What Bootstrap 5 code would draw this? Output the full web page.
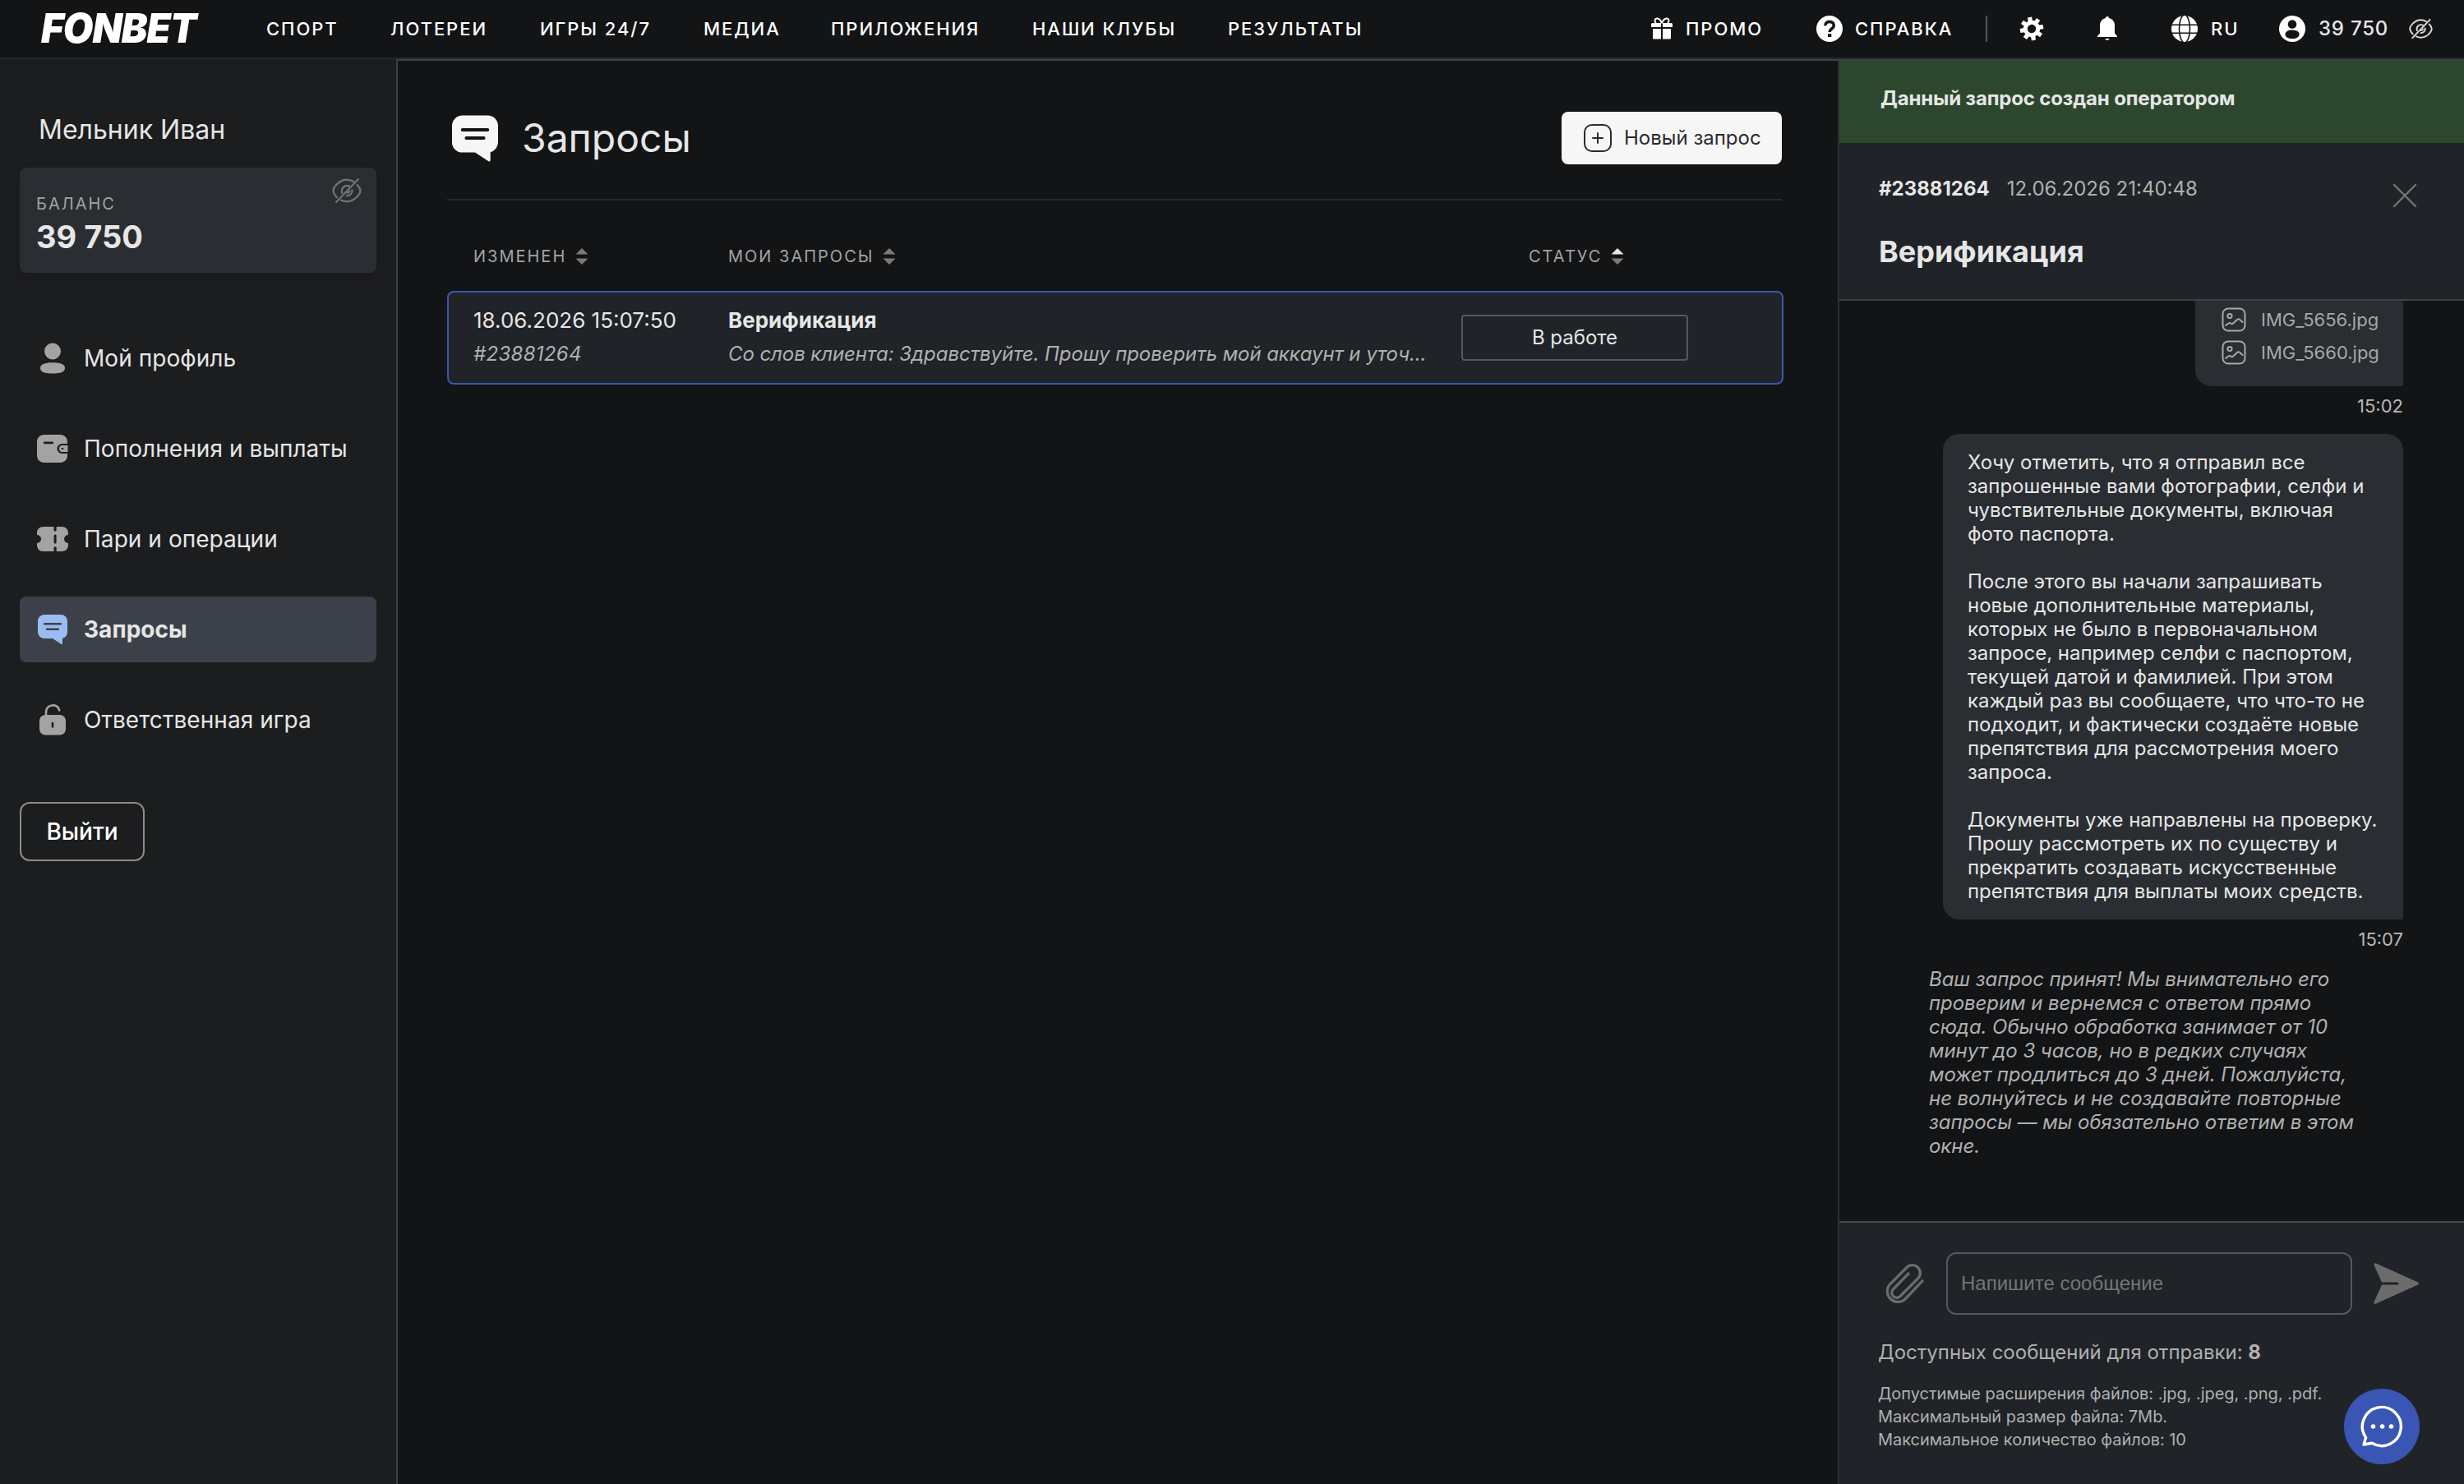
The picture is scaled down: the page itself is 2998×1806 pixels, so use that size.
<!DOCTYPE html>
<html lang="ru">
<head>
<meta charset="utf-8">
<title>Запросы</title>
<meta name="viewport" content="width=device-width, initial-scale=1">
<link href="https://cdn.jsdelivr.net/npm/bootstrap@5.3.0/dist/css/bootstrap.min.css" rel="stylesheet">
<style>
:root{--ink:#e6e6e6;--dim:#a3a3a3;--edge:#3c4048;--card:#2a2d32;--tone:#202328}
body{font-family:Inter,"Liberation Sans",sans-serif;background:#131416;color:var(--ink);font-size:24px;line-height:30px;height:1806px;overflow:hidden}
svg{display:block;flex:none}
a{color:inherit;text-decoration:none}
.topbar{height:72px;border-bottom:2px solid #26282b;color:#fff;font-size:22px;font-weight:500;letter-spacing:1.95px;line-height:30px}
.brand{width:274px;margin-left:50px;letter-spacing:-1px}
.brand span{display:inline-block;font-size:49px;font-weight:900;font-style:italic;line-height:70px;transform-origin:0 50%;transform:scaleX(.965)}
.side{width:484px;background:#1c1d1f;border-right:2px solid var(--edge);padding:66px 24px 0}
.uname{font-size:32px;line-height:40px;padding-left:23px}
.balance{height:128px;margin-top:26px;border-radius:8px;background:var(--card);padding:32px 20px 0;box-shadow:0 6px 16px rgba(0,0,0,.12)}
.balance .lbl{font-size:20px;line-height:24px;letter-spacing:2px;color:var(--dim)}
.balance .sum{font-size:38px;font-weight:700;line-height:44px;margin-top:6px}
.balance svg{position:absolute;right:18px;top:10px}
.menu{margin-top:64px;gap:30px}
.menu a{height:80px;border-radius:8px;padding-left:21px;font-size:28px;letter-spacing:.05px;color:var(--ink)}
.menu a svg{margin-right:19px;color:#a3a3a3}
.menu a.active{background:#3c4049;font-weight:700}
.menu a.active svg{color:#99bdf0}
.btn-exit{margin-top:60px;width:152px;height:72px;border:2px solid #8c8c8c;border-radius:12px;color:#fff;font-size:28px;font-weight:500;padding:0}
.work{border-top:2px solid var(--edge)}
.page{padding:0 68px 0 60px}
.page-head{height:170px;padding-top:20px;border-bottom:2px solid #2a2b31}
.page-head h1{font-size:48px;line-height:60px;font-weight:400;margin:0 0 0 29px}
.btn-new{width:268px;height:64px;border-radius:8px;background:#f6f6f6;color:#2b2b2e;font-size:24px;padding:0 0 0 26px;gap:15px}
.thead-row{height:110px;padding:26px 0 0 32px;font-size:20px;letter-spacing:2px;color:var(--dim)}
.thead-row svg{margin-left:11px}
.c1{width:310px}.c2{width:892px}
.req{height:114px;margin-right:-2px;border:2px solid #3a56b0;border-radius:8px;background:var(--tone);padding:0 0 3px 30px}
.req .l1{font-size:26px;line-height:32px}
.req .l2{font-size:24px;line-height:30px;margin-top:10px;font-style:italic;color:#b0b0b0;letter-spacing:-.08px}
.req .c1 .l2{letter-spacing:.3px}
.req .c2{padding-right:43px}
.status{width:276px;height:56px;border:2px solid #545865;border-radius:4px;line-height:52px;margin-top:3px}
.panel{width:762px;border-left:2px solid #2c2e34}
.note{height:100px;background:#2d472e;padding:31px 0 0 50px;font-weight:700;letter-spacing:-.15px}
.phead{height:192px;background:var(--tone);border-bottom:2px solid var(--edge);padding:41px 0 0 48px}
.phead h2{font-size:36px;line-height:44px;font-weight:700;margin:39px 0 0}
.phead svg{position:absolute;right:58px;top:50px}
.dimtext{color:#b0b0b0}
.chat{height:1120px;padding-right:74px;font-size:24px;line-height:29px}
.bub{background:var(--card);border-radius:20px 20px 0 20px}
.files{width:253px;height:104px;border-radius:0 0 0 20px;padding:3px 0 0 32px;font-size:22px;color:#a8a8a8}
.files div{height:40px;gap:18px}
.files div span{padding-top:1px}
.stamp{height:58px;padding-top:10px;font-size:22px;color:#b8b8b8}
.txt{width:560px;padding:20px 0 20px 30px;white-space:pre-line;letter-spacing:-.01px}
.sys{width:560px;margin-left:109px;padding-right:30px;font-style:italic;color:#b0b0b0;white-space:pre-line;letter-spacing:-.06px}
.composer{height:320px;background:var(--tone);border-top:2px solid #454952}
.crow{padding:36px 55px 0 55px;color:#6b6b6b}
.crow input{flex:none;width:494px;height:76px;margin-left:27px;border:2px solid #545865;border-radius:12px;background:transparent;padding:0 16px;font-family:"Liberation Sans",sans-serif;font-size:24px;color:#ddd}
.crow input::placeholder{color:#757575;opacity:1}
.left8{padding:31px 0 0 47px}
.rules{padding:21px 0 0 47px;font-size:20px;line-height:28px;letter-spacing:-.04px}
.fab{position:absolute;right:54px;bottom:24px;width:92px;height:92px;background:#3a56b4;border-radius:50%}
</style>
</head>
<body class="d-flex flex-column m-0">
<svg width="0" height="0" class="position-absolute">
  <symbol id="chat" viewBox="0 0 36 36"><path fill="currentColor" fill-rule="evenodd" d="M8 0h20a8 8 0 0 1 8 8v13a8 8 0 0 1-6 7.700V35a1 1 0 0 1-1.700.700L18 29H8a8 8 0 0 1-8-8V8a8 8 0 0 1 8-8zM8.200 10a1.300 1.300 0 0 0 0 2.600h19.600a1.300 1.300 0 0 0 0-2.600zM11.200 16.400a1.300 1.300 0 0 0 0 2.600h13.600a1.300 1.300 0 0 0 0-2.600z"/></symbol>
  <symbol id="eye" viewBox="0 0 34 30"><g fill="none" stroke="currentColor" stroke-width="2.300" stroke-linecap="round"><path d="M5 28L30 2"/><path d="M5.500 22.500C3 20 1.500 17 1.500 15 1.500 11 8 2.500 17 2.500c3 0 5.500.800 7.700 2.200M29 8.500c2.200 2.300 3.500 4.900 3.500 6.500 0 4-6.500 12.500-15.500 12.500-2.400 0-4.500-.600-6.500-1.500"/><path d="M11.500 17.500C10 11.500 15 8 20 9.800M23 14.500c.5 3.500-2 6.500-6 6.500"/><path d="M17.500 17.500c1.500 0 2.200-1 2.400-2"/></g></symbol>
  <symbol id="pic" viewBox="0 0 30 30"><g fill="none" stroke="currentColor" stroke-width="2"><rect x="1.500" y="1.500" width="27" height="27" rx="6.500"/><circle cx="10" cy="10.500" r="2.600"/><path stroke-linecap="round" stroke-linejoin="round" d="M5 22l3.500-2.500c1-.7 2-.6 2.800.1.900.8 1.900.8 2.800 0l5-4.600c1-.9 2.200-.8 3.200.1L25.500 18"/></g></symbol>
  <symbol id="sort" viewBox="0 0 16 20"><path d="M8 0l7.500 7.500H.500z" fill="var(--up,#7a7a7a)"/><path d="M8 20l7.500-7.500H.500z" fill="#7a7a7a"/></symbol>
</svg>

<header class="topbar d-flex align-items-center flex-shrink-0">
  <a class="brand" href="#"><span>FONBET</span></a>
  <nav class="d-flex text-nowrap">
    <a href="#" style="width:151px">СПОРТ</a><a href="#" style="width:182px">ЛОТЕРЕИ</a><a href="#" style="width:199px">ИГРЫ 24/7</a><a href="#" style="width:155px">МЕДИА</a><a href="#" style="width:245px">ПРИЛОЖЕНИЯ</a><a href="#" style="width:238px">НАШИ КЛУБЫ</a><a href="#">РЕЗУЛЬТАТЫ</a>
  </nav>
  <div class="d-flex align-items-center ms-auto text-nowrap" style="width:989px">
    <a href="#" class="d-flex align-items-center" style="width:201px">
      <svg width="26" height="28" viewBox="0 0 26 28" class="me-3"><g fill="#fff"><path d="M0 8.500A1.500 1.500 0 0 1 1.500 7H12v5H0zM14 7h10.500A1.500 1.500 0 0 1 26 8.500V12H14zM2 14h10v12.500H3A1 1 0 0 1 2 25.500zM14 14h10v11.500a1 1 0 0 1-1 1h-9z"/><path d="M13 7C10 0 4.500.5 4.500 4c0 1.500.8 2.500 1.500 3M13 7c3-7 8.500-6.500 8.500-3 0 1.500-.8 2.500-1.500 3" fill="none" stroke="#fff" stroke-width="2"/></g></svg>ПРОМО</a>
    <a href="#" class="d-flex align-items-center" style="width:206px">
      <svg width="32" height="32" viewBox="0 0 32 32" style="margin-right:15px"><circle cx="16" cy="16" r="16" fill="#fff"/><path d="M10.800 12.300c0-3.200 2.200-4.900 5.200-4.900s5.300 1.800 5.300 4.600c0 4-5.200 4-5.200 8" fill="none" stroke="#131416" stroke-width="3.600"/><path d="M14 22.200h4.300v3.800H14z" fill="#131416"/></svg>СПРАВКА</a>
    <span style="width:2px;height:32px;background:#55575b;margin-right:39px"></span>
    <a href="#" style="width:94px"><svg width="30" height="30" viewBox="0 0 30 30"><g transform="rotate(-10 15 15)" fill="none" stroke="#fff"><circle cx="15" cy="15" r="7.700" stroke-width="5"/><g stroke-width="5.200"><path d="M15 .8v5M15 24.200v5M.8 15h5M24.200 15h5M5 5l3.500 3.500M21.500 21.500L25 25M5 25l3.500-3.500M21.500 8.500L25 5"/></g></g></svg></a>
    <a href="#" style="width:91px"><svg width="26" height="30" viewBox="0 0 26 30" fill="#fff"><path d="M13 0a2 2 0 0 1 2 2c4.500 1 7 4.500 7 9v9.500l3 3.500v1H1v-1l3-3.500V11c0-4.500 2.500-8 7-9a2 2 0 0 1 2-2zM10.300 27h5.400a2.800 2.800 0 0 1-5.400 0z"/></svg></a>
    <a href="#" class="d-flex align-items-center" style="width:131px"><svg width="32" height="32" viewBox="0 0 32 32" style="margin-right:16px"><circle cx="16" cy="16" r="16" fill="#fff"/><g fill="none" stroke="#131416" stroke-width="1.600"><ellipse cx="16" cy="16" rx="6.500" ry="17"/><path d="M0 11.200h32M0 21.200h32"/></g></svg>RU</a>
    <a href="#" class="d-flex align-items-center" style="width:158px;font-size:24px;letter-spacing:.8px;color:#e6e6e6"><svg width="32" height="32" viewBox="0 0 32 32" style="margin-right:16px"><circle cx="16" cy="16" r="16" fill="#fff"/><circle cx="16" cy="10.500" r="5.300" fill="#131416"/><path d="M7.500 23c0-3.600 3.500-5.500 8.500-5.500s8.500 1.900 8.500 5.500c0 3.300-3.500 5-8.500 5s-8.500-1.700-8.500-5z" fill="#131416"/></svg>39 750</a>
    <svg width="29" height="26" color="#d9d9d9"><use href="#eye"/></svg>
  </div>
</header>

<div class="d-flex flex-grow-1">
  <aside class="side flex-shrink-0">
    <div class="uname">Мельник Иван</div>
    <div class="balance position-relative">
      <div class="lbl">БАЛАНС</div>
      <div class="sum">39 750</div>
      <svg width="36" height="36" color="#6f7073"><use href="#eye"/></svg>
    </div>
    <nav class="menu d-flex flex-column">
      <a href="#" class="d-flex align-items-center"><svg width="38" height="38" viewBox="0 0 38 38" fill="currentColor"><circle cx="19" cy="10.500" r="10"/><path d="M4 31c0-4.500 5-6.700 15-6.700S34 26.500 34 31s-5 6.500-15 6.500S4 35.500 4 31z"/></svg>Мой профиль</a>
      <a href="#" class="d-flex align-items-center"><svg width="38" height="34" viewBox="0 0 38 34"><path fill="currentColor" fill-rule="evenodd" d="M9 0h19c5.500 0 9 3.500 9 9v2h-6.500a6 6 0 0 0 0 12H37v2c0 5.500-3.500 9-9 9H9c-5.500 0-9-3.500-9-9V9c0-5.500 3.500-9 9-9zM9.200 8.600a1.300 1.300 0 0 0 0 2.600h9.600a1.300 1.300 0 0 0 0-2.600z"/><path fill="currentColor" fill-rule="evenodd" d="M31 13h6.500v8H31a4 4 0 0 1 0-8zm-.5 3a1 1 0 0 0 0 2h1a1 1 0 0 0 0-2z"/></svg>Пополнения и выплаты</a>
      <a href="#" class="d-flex align-items-center"><svg width="38" height="30" viewBox="0 0 38 30" fill="currentColor"><path d="M8 0h12.500v4.500a1.700 1.700 0 0 0 3.200 0V0H30c5 0 8 3 8 8v2a5 5 0 0 0 0 10v2c0 5-3 8-8 8h-6.300v-4.500a1.700 1.700 0 0 0-3.200 0V30H8c-5 0-8-3-8-8v-2a5 5 0 0 0 0-10V8c0-5 3-8 8-8z"/><rect x="20.600" y="9.500" width="3" height="11" rx="1.500" fill="#1c1d1f"/></svg>Пари и операции</a>
      <a href="#" class="d-flex align-items-center active"><svg width="38" height="36" color="#99bdf0"><use href="#chat"/></svg>Запросы</a>
      <a href="#" class="d-flex align-items-center"><svg width="38" height="38" viewBox="0 0 38 38"><path d="M11 14V9.500a8 8 0 0 1 7-8c4.500-.7 8 1.500 9.200 6" fill="none" stroke="currentColor" stroke-width="2.600" stroke-linecap="round"/><path fill="currentColor" fill-rule="evenodd" d="M12 13h14c6 0 9 2.500 9 8v8.500c0 5.500-3 8-9 8H12c-6 0-9-2.500-9-8V21c0-5.500 3-8 9-8zm5.700 10v4.500a1.300 1.300 0 0 0 2.600 0V23a1.300 1.300 0 0 0-2.600 0z"/></svg>Ответственная игра</a>
    </nav>
    <button class="btn btn-exit">Выйти</button>
  </aside>

  <div class="work d-flex flex-grow-1">
    <main class="page flex-grow-1">
      <div class="page-head d-flex align-items-center">
        <svg width="56" height="57" style="margin-left:6px" color="#f6f6f6"><use href="#chat"/></svg>
        <h1>Запросы</h1>
        <button class="btn btn-new d-flex align-items-center ms-auto text-nowrap"><svg width="34" height="34" viewBox="0 0 34 34" fill="none" stroke="#2b2b2e" stroke-width="2"><rect x="1" y="1" width="32" height="32" rx="9"/><path stroke-linecap="round" d="M17 11v12M11 17h12"/></svg>Новый запрос</button>
      </div>
      <div class="thead-row d-flex align-items-center">
        <div class="c1 d-flex align-items-center">ИЗМЕНЕН<svg width="16" height="20"><use href="#sort"/></svg></div>
        <div class="c2 d-flex align-items-center">МОИ ЗАПРОСЫ<svg width="16" height="20"><use href="#sort"/></svg></div>
        <div class="d-flex align-items-center" style="padding-left:82px">СТАТУС<svg width="16" height="20" style="--up:#e6e6e6"><use href="#sort"/></svg></div>
      </div>
      <div class="req d-flex align-items-center">
        <div class="c1 flex-shrink-0"><div class="l1">18.06.2026 15:07:50</div><div class="l2">#23881264</div></div>
        <div class="c2 flex-shrink-0"><div class="l1 fw-bold">Верификация</div><div class="l2 text-nowrap">Со слов клиента: Здравствуйте. Прошу проверить мой аккаунт и уточ...</div></div>
        <div class="status text-center">В работе</div>
      </div>
    </main>

    <aside class="panel flex-shrink-0 d-flex flex-column">
      <div class="note">Данный запрос создан оператором</div>
      <div class="phead position-relative">
        <div class="d-flex"><b>#23881264</b><span class="dimtext" style="margin-left:21px">12.06.2026 21:40:48</span></div>
        <h2>Верификация</h2>
        <svg width="28" height="28" viewBox="0 0 28 28"><path d="M1 1l26 26M27 1L1 27" stroke="#737578" stroke-width="2.400" stroke-linecap="round"/></svg>
      </div>
      <div class="chat d-flex flex-column overflow-hidden">
        <div class="bub files ms-auto">
          <div class="d-flex align-items-center"><svg width="30" height="30"><use href="#pic"/></svg><span>IMG_5656.jpg</span></div>
          <div class="d-flex align-items-center"><svg width="30" height="30"><use href="#pic"/></svg><span>IMG_5660.jpg</span></div>
        </div>
        <div class="stamp text-end">15:02</div>
        <div class="bub txt ms-auto">Хочу отметить, что я отправил все
запрошенные вами фотографии, селфи и
чувствительные документы, включая
фото паспорта.

После этого вы начали запрашивать
новые дополнительные материалы,
которых не было в первоначальном
запросе, например селфи с паспортом,
текущей датой и фамилией. При этом
каждый раз вы сообщаете, что что-то не
подходит, и фактически создаёте новые
препятствия для рассмотрения моего
запроса.

Документы уже направлены на проверку.
Прошу рассмотреть их по существу и
прекратить создавать искусственные
препятствия для выплаты моих средств.</div>
        <div class="stamp text-end">15:07</div>
        <div class="sys">Ваш запрос принят! Мы внимательно его
проверим и вернемся с ответом прямо
сюда. Обычно обработка занимает от 10
минут до 3 часов, но в редких случаях
может продлиться до 3 дней. Пожалуйста,
не волнуйтесь и не создавайте повторные
запросы — мы обязательно ответим в этом
окне.</div>
      </div>
      <div class="composer position-relative">
        <div class="crow d-flex align-items-center">
          <svg width="48" height="50" viewBox="0 0 48 50" fill="none" stroke="currentColor" stroke-width="3.300"><path d="M30 12L10.500 32a6 6 0 0 0 8.500 8.500L40.500 19a9.500 9.500 0 0 0-13.500-13.500L6 26.500A13 13 0 0 0 24.500 44.500L47 21"/></svg>
          <input type="text" placeholder="Напишите сообщение">
          <svg width="56" height="50" viewBox="0 0 56 50" style="margin-left:26px"><path fill="currentColor" d="M.5 2.500C0 .800 1.500-.300 3 .400L54 23.500c1.500.700 1.500 2.300 0 3L3 49.600C1.500 50.300 0 49.200.500 47.500L10 26.500h19a1.500 1.500 0 0 0 0-3H10z"/></svg>
        </div>
        <div class="left8 dimtext">Доступных сообщений для отправки: <b>8</b></div>
        <div class="rules dimtext">Допустимые расширения файлов: .jpg, .jpeg, .png, .pdf.<br>Максимальный размер файла: 7Mb.<br>Максимальное количество файлов: 10</div>
        <button class="btn fab p-0 d-flex align-items-center justify-content-center"><svg width="52" height="52" viewBox="0 0 52 52"><path d="M4 48l2.600-8.500A23.500 23.500 0 1 1 14 46.300z" fill="none" stroke="#fff" stroke-width="3.400" stroke-linejoin="round"/><g fill="#fff"><circle cx="15.500" cy="26" r="2.800"/><circle cx="26.500" cy="26" r="2.800"/><circle cx="37.500" cy="26" r="2.800"/></g></svg></button>
      </div>
    </aside>
  </div>
</div>
<script src="https://cdn.jsdelivr.net/npm/bootstrap@5.3.0/dist/js/bootstrap.bundle.min.js"></script>
</body>
</html>
